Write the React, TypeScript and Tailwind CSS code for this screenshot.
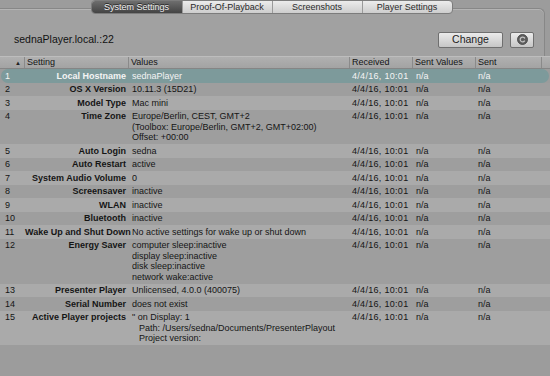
import React from 'react';

type Row = {
  id: number;
  setting: string;
  values: string[];
  indent?: boolean;
};

const rows: Row[] = [
  { id: 1, setting: 'Local Hostname', values: ['sednaPlayer'] },
  { id: 2, setting: 'OS X Version', values: ['10.11.3 (15D21)'] },
  { id: 3, setting: 'Model Type', values: ['Mac mini'] },
  {
    id: 4,
    setting: 'Time Zone',
    values: ['Europe/Berlin, CEST, GMT+2', '(Toolbox: Europe/Berlin, GMT+2, GMT+02:00)', 'Offset: +00:00'],
  },
  { id: 5, setting: 'Auto Login', values: ['sedna'] },
  { id: 6, setting: 'Auto Restart', values: ['active'] },
  { id: 7, setting: 'System Audio Volume', values: ['0'] },
  { id: 8, setting: 'Screensaver', values: ['inactive'] },
  { id: 9, setting: 'WLAN', values: ['inactive'] },
  { id: 10, setting: 'Bluetooth', values: ['inactive'] },
  { id: 11, setting: 'Wake Up and Shut Down', values: ['No active settings for wake up or shut down'] },
  {
    id: 12,
    setting: 'Energy Saver',
    values: ['computer sleep:inactive', 'display sleep:inactive', 'disk sleep:inactive', 'network wake:active'],
  },
  { id: 13, setting: 'Presenter Player', values: ['Unlicensed, 4.0.0 (400075)'] },
  { id: 14, setting: 'Serial Number', values: ['does not exist'] },
  {
    id: 15,
    setting: 'Active Player projects',
    values: ['" on Display: 1', 'Path: /Users/sedna/Documents/PresenterPlayout', 'Project version:'],
    indent: true,
  },
];

const tabs = ['System Settings', 'Proof-Of-Playback', 'Screenshots', 'Player Settings'];

const RefreshIcon = () => (
  <svg width="11" height="11" viewBox="0 0 11 11">
    <circle cx="5.5" cy="5.5" r="5" fill="#5e5e5e" stroke="#3f3f3f" strokeWidth="0.8" />
    <path d="M7.6 4.2 A2.4 2.4 0 1 0 7.7 6.6" fill="none" stroke="#c4c4c4" strokeWidth="1.2" />
    <path d="M6.6 3.3 L8.2 3.6 L7.9 5.2 Z" fill="#c4c4c4" />
  </svg>
);

const App: React.FC = () => {
  return (
    <div
      className="w-[550px] h-[376px] overflow-hidden bg-[#9c9c9c] text-[#151515] flex flex-col"
      style={{ fontFamily: '"Liberation Sans", Arial, sans-serif' }}
    >
      {/* top panel with tabs */}
      <div className="w-[545px] flex flex-col">
        <div className="relative z-10 flex justify-center h-[14px] -mb-[6px] pr-[2px]">
          <div className="flex h-[14px] rounded-[4px] border border-[#7c7c7c] overflow-hidden bg-gradient-to-b from-[#ececec] to-[#cdcdcd]">
            {tabs.map((t, i) => (
              <div
                key={t}
                className={
                  i === 0
                    ? 'w-[90px] flex items-center justify-center text-[9px] leading-none text-[#f2f2f2] bg-gradient-to-b from-[#6e6e6e] to-[#444444] [text-shadow:0_-1px_0_#222]'
                    : 'w-[90px] flex items-center justify-center text-[9px] leading-none text-[#2a2a2a] border-l border-[#9a9a9a]'
                }
              >
                {t}
              </div>
            ))}
          </div>
        </div>
        <div className="h-[48px] border-t border-r border-[#878787] rounded-tr-[6px] bg-[#a1a1a1] shadow-[inset_0_1px_0_#b4b4b4] flex items-center justify-between pt-[14px] pl-[14px] pr-[10px]">
          <div className="text-[10.5px] leading-none text-[#111]">sednaPlayer.local.:22</div>
          <div className="flex items-center gap-[7px]">
            <button className="w-[65px] h-[16px] rounded-[2px] border border-[#6f6f6f] bg-gradient-to-b from-[#ebebeb] to-[#c6c6c6] text-[10.5px] leading-none text-[#222] flex items-center justify-center">
              Change
            </button>
            <button className="w-[24px] h-[16px] rounded-[2px] border border-[#6f6f6f] bg-gradient-to-b from-[#ebebeb] to-[#c6c6c6] flex items-center justify-center">
              <RefreshIcon />
            </button>
          </div>
        </div>
      </div>

      {/* table header */}
      <div className="flex h-[13px] bg-gradient-to-b from-[#b0b0b0] to-[#a3a3a3] border-t border-[#bdbdbd] border-b border-b-[#858585] text-[9px] leading-none">
        <div className="w-[25px] flex items-center justify-end pr-[3px] border-r border-[#8a8a8a] text-[6px] text-[#222]">▲</div>
        <div className="w-[104px] flex items-center pl-[2px] border-r border-[#8a8a8a]">Setting</div>
        <div className="w-[221px] flex items-center pl-[2px] border-r border-[#8a8a8a]">Values</div>
        <div className="w-[63px] flex items-center pl-[2px] border-r border-[#8a8a8a]">Received</div>
        <div className="w-[63px] flex items-center pl-[2px] border-r border-[#8a8a8a]">Sent Values</div>
        <div className="w-[66px] flex items-center pl-[2px] border-r border-[#8a8a8a]">Sent</div>
      </div>

      {/* table body */}
      <div className="flex flex-col text-[9px] leading-[10.5px]">
        {rows.map((r) => {
          const selected = r.id === 1;
          const bg = selected
            ? 'bg-[#7d9a9b] text-[#f4f4f4] rounded-full mx-[1px]'
            : r.id % 2 === 1
              ? 'bg-[#aaaaaa]'
              : 'bg-[#9e9e9e]';
          return (
            <div key={r.id} className={`flex py-[1.5px] ${bg}`}>
              <div className={selected ? 'w-[24px] pl-[4px]' : 'w-[25px] pl-[5px]'}>{r.id}</div>
              <div className="w-[104px] pr-[3px] text-right font-bold whitespace-nowrap">{r.setting}</div>
              <div className="w-[221px] pl-[3px] whitespace-nowrap">
                {r.values.map((v, i) => (
                  <div key={i} className={r.indent && i > 0 ? 'pl-[7px]' : ''}>
                    {v}
                  </div>
                ))}
              </div>
              <div className="w-[63px] pl-[2px] whitespace-nowrap tracking-[0.3px]">4/4/16, 10:01</div>
              <div className="w-[63px] pl-[3px]">n/a</div>
              <div className="flex-1 pl-[2px]">n/a</div>
            </div>
          );
        })}
      </div>
    </div>
  );
};

export default App;
